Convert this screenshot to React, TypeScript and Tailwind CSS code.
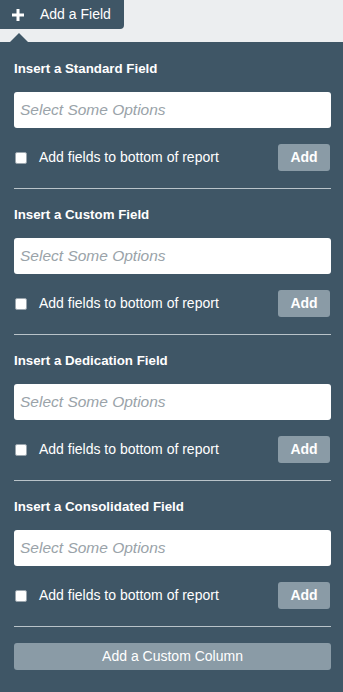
const sections = ["Standard", "Custom", "Dedication", "Consolidated"];

function Section({ name }: { name: string }) {
  return (
    <div className="pt-[18px]">
      <h3 className="text-[13.3px] font-bold leading-4 text-white">Insert a {name} Field</h3>
      <div className="mt-[15px] flex h-9 items-center rounded-[3px] bg-white px-[6px]">
        <span className="text-[15.5px] italic text-[#9aa3a9]">Select Some Options</span>
      </div>
      <div className="mt-4 flex h-[27px] items-center justify-between">
        <label className="flex items-center">
          <span className="ml-px h-3 w-3 rounded-[2px] border border-[#9aa5ad] bg-white" />
          <span className="ml-3 text-[14px] text-white">Add fields to bottom of report</span>
        </label>
        <button className="mr-px h-[27px] w-[52px] rounded-[3px] bg-[#8a9ba6] text-[14px] font-bold text-white">
          Add
        </button>
      </div>
      <div className="mt-[17px] h-px bg-[#b9c3c9]" />
    </div>
  );
}

export default function App() {
  return (
    <div
      className="h-[692px] w-[343px] overflow-hidden bg-[#3f5666]"
      style={{ fontFamily: '"Liberation Sans", Arial, sans-serif' }}
    >
      <div className="relative h-[42px] bg-[#eceef0]">
        <div className="flex h-[29px] w-[124px] items-center rounded-br-[4px] bg-[#3f5666] pl-[11px]">
          <svg width="14" height="14" viewBox="0 0 14 14">
            <path d="M7 1v12M1 7h12" stroke="white" strokeWidth="3" />
          </svg>
          <span className="ml-[15px] text-[14px] text-white">Add a Field</span>
        </div>
        <div className="absolute bottom-0 left-[10px] h-0 w-0 border-x-[9px] border-b-[9px] border-x-transparent border-b-[#3f5666]" />
      </div>
      <div className="pl-[14px] pr-[12px] pt-px">
        {sections.map((s) => (
          <Section key={s} name={s} />
        ))}
        <button className="mt-4 h-[27px] w-full rounded-[3px] bg-[#8a9ba6] text-[14px] text-white">
          Add a Custom Column
        </button>
      </div>
    </div>
  );
}
